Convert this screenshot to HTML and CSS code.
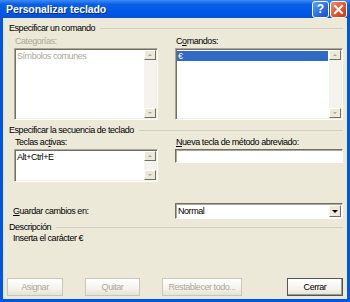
FILE: index.html
```html
<!DOCTYPE html>
<html lang="es">
<head>
    <meta charset="UTF-8">
    <title>Personalizar teclado</title>
    <link rel="stylesheet" href="styles.css">
</head>
<body>
    <div class="window">
        <div class="titlebar">
            <span class="title">Personalizar teclado</span>
            <div class="title-buttons">
                <span class="tb help">?</span>
                <span class="tb close">
                    <svg width="11" height="11" viewBox="0 0 11 11"><path d="M2 2 L9 9 M9 2 L2 9" stroke="#fff" stroke-width="2" stroke-linecap="square"/></svg>
                </span>
            </div>
        </div>

        <div class="client">
            <div class="group-head"><span>Especificar un comando</span></div>
            <div class="pair">
                <div class="field">
                    <label class="disabled">Categorías:</label>
                    <div class="listbox tall">
                        <div class="items"><div class="item disabled">Símbolos comunes</div></div>
                        <div class="vscroll"><span class="arrow up"></span><span class="arrow down"></span></div>
                    </div>
                </div>
                <div class="field">
                    <label>C<u>o</u>mandos:</label>
                    <div class="listbox tall">
                        <div class="items"><div class="item selected">€</div></div>
                        <div class="vscroll"><span class="arrow up"></span><span class="arrow down"></span></div>
                    </div>
                </div>
            </div>

            <div class="group-head second"><span>Especificar la secuencia de teclado</span></div>
            <div class="pair">
                <div class="field">
                    <label>Teclas ac<u>t</u>ivas:</label>
                    <div class="listbox short">
                        <div class="items"><div class="item">Alt+Ctrl+E</div></div>
                        <div class="vscroll"><span class="arrow up"></span><span class="arrow down"></span></div>
                    </div>
                </div>
                <div class="field">
                    <label><u>N</u>ueva tecla de método abreviado:</label>
                    <div class="textbox"></div>
                </div>
            </div>

            <div class="pair save-row">
                <label class="save-label"><u>G</u>uardar cambios en:</label>
                <div class="select">
                    <span class="select-value">Normal</span>
                    <span class="select-btn"><span class="tri"></span></span>
                </div>
            </div>

            <div class="group-head desc-head"><span>Descripción</span></div>
            <div class="desc-text">Inserta el carácter €</div>

            <div class="buttons">
                <button class="btn disabled w-asignar">Asignar</button>
                <button class="btn disabled w-quitar">Quitar</button>
                <button class="btn disabled w-reset">Restablecer todo...</button>
                <button class="btn default w-cerrar">Cerrar</button>
            </div>
        </div>
    </div>
</body>
</html>
```

FILE: styles.css
```css
body {
    margin: 0;
    padding: 0;
    font-family: "Liberation Sans", Arial, sans-serif;
    font-size: 9px;
    letter-spacing: -0.45px;
    color: #000;
}

.window {
    width: 344px;
    height: 299px;
    border: 3px solid #0055e5;
    border-top: none;
    background: #ece9d8;
    display: flex;
    flex-direction: column;
}

.titlebar {
    height: 22px;
    margin: 0 -3px;
    background: linear-gradient(#3b8bf5, #0a5fe6 25%, #0058e8 70%, #0a4fd0);
    display: flex;
    align-items: center;
    justify-content: space-between;
    padding: 0 3px 0 6px;
}

.title {
    color: #fff;
    font-weight: bold;
    font-size: 10.5px;
    letter-spacing: -0.1px;
    text-shadow: 1px 1px 0 #0a2a80;
}

.title-buttons {
    display: flex;
    gap: 1px;
}

.tb {
    width: 15px;
    height: 15px;
    border: 1px solid #fff;
    border-radius: 3px;
    display: flex;
    align-items: center;
    justify-content: center;
    color: #fff;
    font-weight: bold;
    font-size: 12px;
    letter-spacing: 0;
}

.help {
    background: linear-gradient(135deg, #5ea0ff, #2b6ae0 60%, #1c50c8);
}

.close {
    background: linear-gradient(135deg, #f08a68, #e2552e 55%, #c43a16);
}

.client {
    flex: 1;
    padding: 5px 4px 3px 3px;
    display: flex;
    flex-direction: column;
}

label {
    display: block;
    line-height: 11px;
    height: 11px;
    white-space: nowrap;
}

.disabled {
    color: #aca899;
}

/* group box headers with etched line */
.group-head {
    display: flex;
    align-items: center;
    height: 11px;
    line-height: 11px;
    padding-left: 3px;
}

.group-head::after {
    content: "";
    flex: 1;
    height: 0;
    border-top: 1px solid #d0d0bf;
    margin-left: 5px;
}

.group-head.second {
    margin-top: 5px;
}

.pair {
    display: grid;
    grid-template-columns: 144px 168px;
    column-gap: 17px;
    padding-left: 8px;
}

.field label {
    margin-top: 2px;
    margin-bottom: 1px;
    padding-left: 1px;
}

.group-head.second + .pair .field label {
    margin-top: 1px;
}

.listbox {
    background: #fff;
    border: 1px solid;
    border-color: #aca899 #fff #fff #aca899;
    box-shadow: inset 1px 1px 0 #716f64, inset -1px -1px 0 #f1efe2;
    display: flex;
    padding: 1px;
}

.listbox.tall {
    height: 68px;
}

.listbox.short {
    height: 29px;
}

.items {
    flex: 1;
    padding-top: 1px;
}

.item {
    height: 10px;
    line-height: 10px;
    padding-left: 1px;
}

.item.selected {
    background: #316ac5;
    color: #fff;
    margin-right: 1px;
}

.vscroll {
    width: 12px;
    background: #f4f3ee;
    display: flex;
    flex-direction: column;
    justify-content: space-between;
}

.arrow {
    height: 10px;
    background: #ece9d8;
    border: 1px solid;
    border-color: #fff #716f64 #716f64 #fff;
    box-sizing: border-box;
    position: relative;
}

.arrow::after {
    content: "";
    position: absolute;
    left: 3px;
    top: 3px;
    border-left: 2px solid transparent;
    border-right: 2px solid transparent;
}

.arrow.up::after {
    border-bottom: 2px solid #aca899;
}

.arrow.down::after {
    border-top: 2px solid #aca899;
}

.textbox {
    height: 12px;
    background: #fff;
    border: 1px solid;
    border-color: #716f64 #fff #fff #716f64;
    box-shadow: inset 1px 1px 0 #aca899;
}

.save-row {
    margin-top: 21px;
    align-items: center;
}

.save-label {
    padding-left: 0;
    margin-left: -1px;
}

.select {
    height: 14px;
    background: #fff;
    border: 1px solid;
    border-color: #716f64 #fff #fff #716f64;
    box-shadow: inset 1px 1px 0 #aca899;
    display: flex;
    align-items: center;
    justify-content: space-between;
    padding-left: 2px;
}

.select-value {
    line-height: 12px;
}

.select-btn {
    width: 12px;
    height: 12px;
    margin-right: 1px;
    background: #ece9d8;
    border: 1px solid;
    border-color: #fff #716f64 #716f64 #fff;
    box-sizing: border-box;
    display: flex;
    align-items: center;
    justify-content: center;
}

.tri {
    border-left: 3px solid transparent;
    border-right: 3px solid transparent;
    border-top: 3px solid #000;
}

.desc-head {
    margin-top: 3px;
}

.desc-text {
    line-height: 11px;
    padding-left: 7px;
}

.buttons {
    margin-top: 34px;
    display: flex;
    padding-left: 1px;
}

.btn {
    height: 18px;
    font-family: inherit;
    font-size: inherit;
    letter-spacing: inherit;
    white-space: nowrap;
    background: linear-gradient(#fff, #f4f3ee 60%, #e6e3d3);
    border: 1px solid #c9c7ba;
    padding: 0;
    border-radius: 0;
}

.btn.disabled {
    color: #aca899;
}

.btn.default {
    border: 1px solid #555;
    box-shadow: inset -1px -1px 0 #999;
}

.w-asignar {
    width: 56px;
}

.w-quitar {
    width: 55px;
    margin-left: 22px;
}

.w-reset {
    width: 80px;
    margin-left: 22px;
}

.w-cerrar {
    width: 56px;
    margin-left: 45px;
}
```
